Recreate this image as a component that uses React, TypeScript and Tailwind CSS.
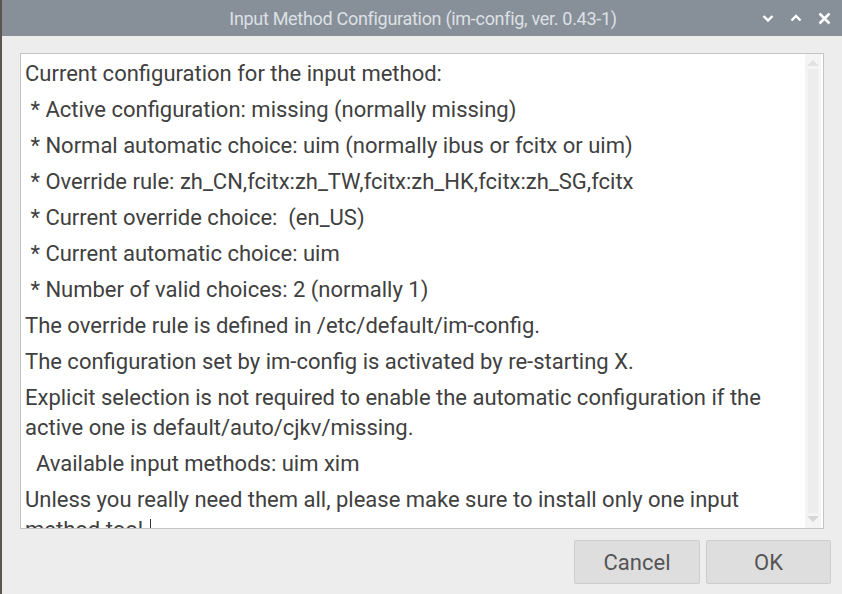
import React from 'react';

const lines: string[][] = [
  ['Current configuration for the input method:'],
  [' * Active configuration: missing (normally missing)'],
  [' * Normal automatic choice: uim (normally ibus or fcitx or uim)'],
  [' * Override rule: zh_CN,fcitx:zh_TW,fcitx:zh_HK,fcitx:zh_SG,fcitx'],
  [' * Current override choice:  (en_US)'],
  [' * Current automatic choice: uim'],
  [' * Number of valid choices: 2 (normally 1)'],
  ['The override rule is defined in /etc/default/im-config.'],
  ['The configuration set by im-config is activated by re-starting X.'],
  ['Explicit selection is not required to enable the automatic configuration if the', 'active one is default/auto/cjkv/missing.'],
  ['  Available input methods: uim xim'],
  ['Unless you really need them all, please make sure to install only one input', 'method tool.'],
];

export default function App() {
  return (
    <div className="w-[842px] h-[594px] flex flex-col bg-[#ededed] border-l-2 border-[#5a5550] overflow-hidden" style={{ fontFamily: 'Roboto, "Liberation Sans", sans-serif' }}>
      {/* Title bar */}
      <div className="h-[36px] shrink-0 bg-[#878f99] flex items-center relative">
        <div className="flex-1 text-center text-[18px] tracking-[-0.3px] text-[#dde0e4] pl-[2px]">
          Input Method Configuration (im-config, ver. 0.43-1)
        </div>
        <div className="absolute right-[11px] top-0 h-full flex items-center gap-[16px]">
          <svg width="12" height="12" viewBox="0 0 12 12"><path d="M1.5 4 L6 8.5 L10.5 4" fill="none" stroke="#fff" strokeWidth="2.4" /></svg>
          <svg width="12" height="12" viewBox="0 0 12 12"><path d="M1.5 8.5 L6 4 L10.5 8.5" fill="none" stroke="#fff" strokeWidth="2.4" /></svg>
          <svg width="13" height="13" viewBox="0 0 13 13"><path d="M1.5 1.5 L11.5 11.5 M11.5 1.5 L1.5 11.5" fill="none" stroke="#fff" strokeWidth="2.6" /></svg>
        </div>
      </div>

      {/* Body */}
      <div className="flex-1 flex flex-col px-[18px] pt-[17px] pb-[10px]">
        <div className="h-[476px] bg-white border border-[#c4c4c4] flex overflow-hidden">
          <div className="flex-1 pl-[4px] pt-[5px] text-[22px] leading-[30px] text-[#404040] whitespace-pre overflow-hidden">
            {lines.map((para, i) => (
              <div key={i} className="mb-[6px]">
                {para.map((l, j) => (
                  <div key={j}>
                    {l}
                    {i === lines.length - 1 && j === para.length - 1 && (
                      <span className="inline-block w-[1px] h-[24px] bg-[#333] align-middle ml-[1px]" />
                    )}
                  </div>
                ))}
              </div>
            ))}
          </div>
          <div className="w-[16px] mr-[2px] bg-[#f4f4f4] flex flex-col items-center justify-between py-[5px]">
            <svg width="12" height="7" viewBox="0 0 12 7"><path d="M0 7 L6 1 L12 7 Z" fill="#e2e2e2" /></svg>
            <div className="flex-1 w-[10px] bg-[#ededed] my-[3px]" />
            <svg width="12" height="7" viewBox="0 0 12 7"><path d="M0 0 L6 6 L12 0 Z" fill="#d6d6d6" /></svg>
          </div>
        </div>

        <div className="flex justify-end gap-[6px] mt-[11px] -mr-[7px]">
          <button className="w-[126px] h-[44px] bg-[#dedede] border border-[#cdcdcd] rounded-[2px] text-[22px] text-[#555]">Cancel</button>
          <button className="w-[125px] h-[44px] bg-[#dedede] border border-[#cdcdcd] rounded-[2px] text-[22px] text-[#555]">OK</button>
        </div>
      </div>
    </div>
  );
}
